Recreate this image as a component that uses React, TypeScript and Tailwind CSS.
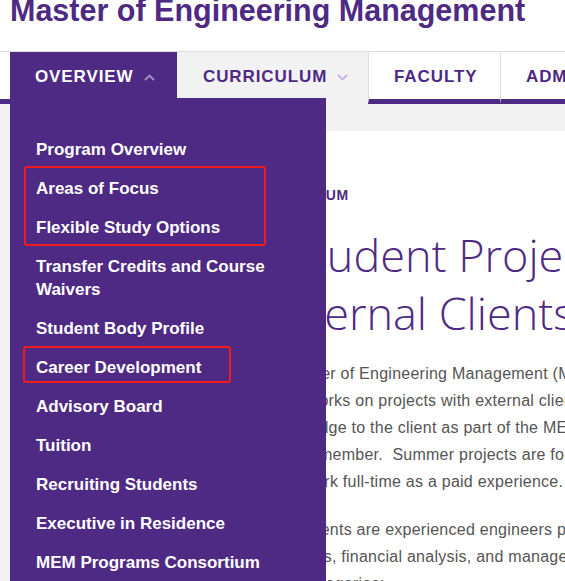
import React from 'react';

const purple = 'bg-[#4e2a84]';

const menuItems = [
  'Program Overview',
  'Areas of Focus',
  'Flexible Study Options',
  'Transfer Credits and Course Waivers',
  'Student Body Profile',
  'Career Development',
  'Advisory Board',
  'Tuition',
  'Recruiting Students',
  'Executive in Residence',
  'MEM Programs Consortium',
];

const Chevron: React.FC<{ up?: boolean; color: string }> = ({ up, color }) => (
  <svg width="11" height="7" viewBox="0 0 11 7" className="ml-[10px] shrink-0">
    <polyline
      points={up ? '1,6 5.5,1.5 10,6' : '1,1 5.5,5.5 10,1'}
      fill="none"
      stroke={color}
      strokeWidth="1.8"
    />
  </svg>
);

const NavTab: React.FC<{
  label: string;
  className: string;
  children?: React.ReactNode;
}> = ({ label, className, children }) => (
  <div
    className={`flex items-center pt-[3px] h-[52px] border-b-[5px] text-[17px] font-bold tracking-[0.9px] whitespace-nowrap ${className}`}
  >
    {label}
    {children}
  </div>
);

export default function App() {
  return (
    <div className="relative w-[565px] h-[581px] overflow-hidden bg-white font-['Liberation_Sans',Arial,sans-serif]">
      {/* page title */}
      <h1 className="-mt-[5px] pl-[10px] text-[30.5px] leading-[30px] font-bold text-[#4e2a84] whitespace-nowrap">
        Master of Engineering Management
      </h1>

      {/* tab bar */}
      <nav className="mt-[26px] flex border-t border-[#dedede] overflow-hidden">
        <div className="w-[10px] shrink-0 h-[52px] border-b-[5px] border-[#4e2a84]" />
        <NavTab
          label="OVERVIEW"
          className={`${purple} shrink-0 border-[#4e2a84] text-white w-[167px] pl-[25px]`}
        >
          <Chevron up color="#a690cc" />
        </NavTab>
        <NavTab
          label="CURRICULUM"
          className="bg-[#f2f2f2] shrink-0 border-[#f2f2f2] text-[#4e2a84] w-[191px] pl-[26px]"
        >
          <Chevron color="#c3b4de" />
        </NavTab>
        <NavTab
          label="FACULTY"
          className="shrink-0 border-[#4e2a84] text-[#4e2a84] w-[132px] pl-[25px] border-l border-l-[#dedede]"
        />
        <NavTab
          label="ADMISSIONS"
          className="shrink-0 border-[#4e2a84] text-[#4e2a84] w-[200px] pl-[25px] border-l border-l-[#dedede]"
        />
      </nav>
      <div className="h-[27px] bg-[#f2f2f2]" />

      {/* page body */}
      <div className="flex">
        <div className="w-[10px] shrink-0 h-[460px] bg-[#f2f2f2]" />
        <main className="flex-1 min-w-0 overflow-hidden pl-[170px] pt-[54px] whitespace-nowrap">
          <p className="text-[14px] leading-[20px] font-bold tracking-[0.6px] text-[#4e2a84] ml-[10px]">
            HOME / CURRICULUM
          </p>
          <h2 className="mt-[21px] -ml-[7px] font-['Open_Sans',sans-serif] font-light text-[45px] leading-[58px] text-[#4e2a84]">
            MEM Student Projects
            <br />
            and External Clients
          </h2>
          <div className="mt-[18px] -ml-[5px] text-[16px] leading-[27px] tracking-[0.25px] text-[#555555]">
            <p>
              Each year, the Master of Engineering Management (MEM) program assigns a
              <br />
              student team that works on projects with external clients to deliver
              <br />
              insights and knowledge to the client as part of the MEM curriculum.
              <br />
              are led by a faculty member.&nbsp; Summer projects are for students
              <br />
              that would like to work full-time as a paid experience.
            </p>
            <p className="mt-[21px]">
              Incoming MEM students are experienced engineers pursuing
              <br />
              skills in organizations, financial analysis, and management
              <br />
              into the following categories:
            </p>
          </div>
        </main>
      </div>

      {/* open dropdown menu */}
      <ul
        className={`absolute left-[10px] top-[98px] w-[316px] h-[500px] ${purple} pt-[32px] pl-[26px] pr-[26px]`}
      >
        {menuItems.map((item) => (
          <li
            key={item}
            className="py-[8px] text-[17px] leading-[23px] font-bold text-white"
          >
            {item}
          </li>
        ))}
      </ul>

      {/* red highlight boxes */}
      <div className="absolute left-[24px] top-[166px] w-[242px] h-[80px] border-2 border-[#f01c1c] rounded-[3px]" />
      <div className="absolute left-[23px] top-[346px] w-[208px] h-[37px] border-2 border-[#f01c1c] rounded-[3px]" />
    </div>
  );
}
